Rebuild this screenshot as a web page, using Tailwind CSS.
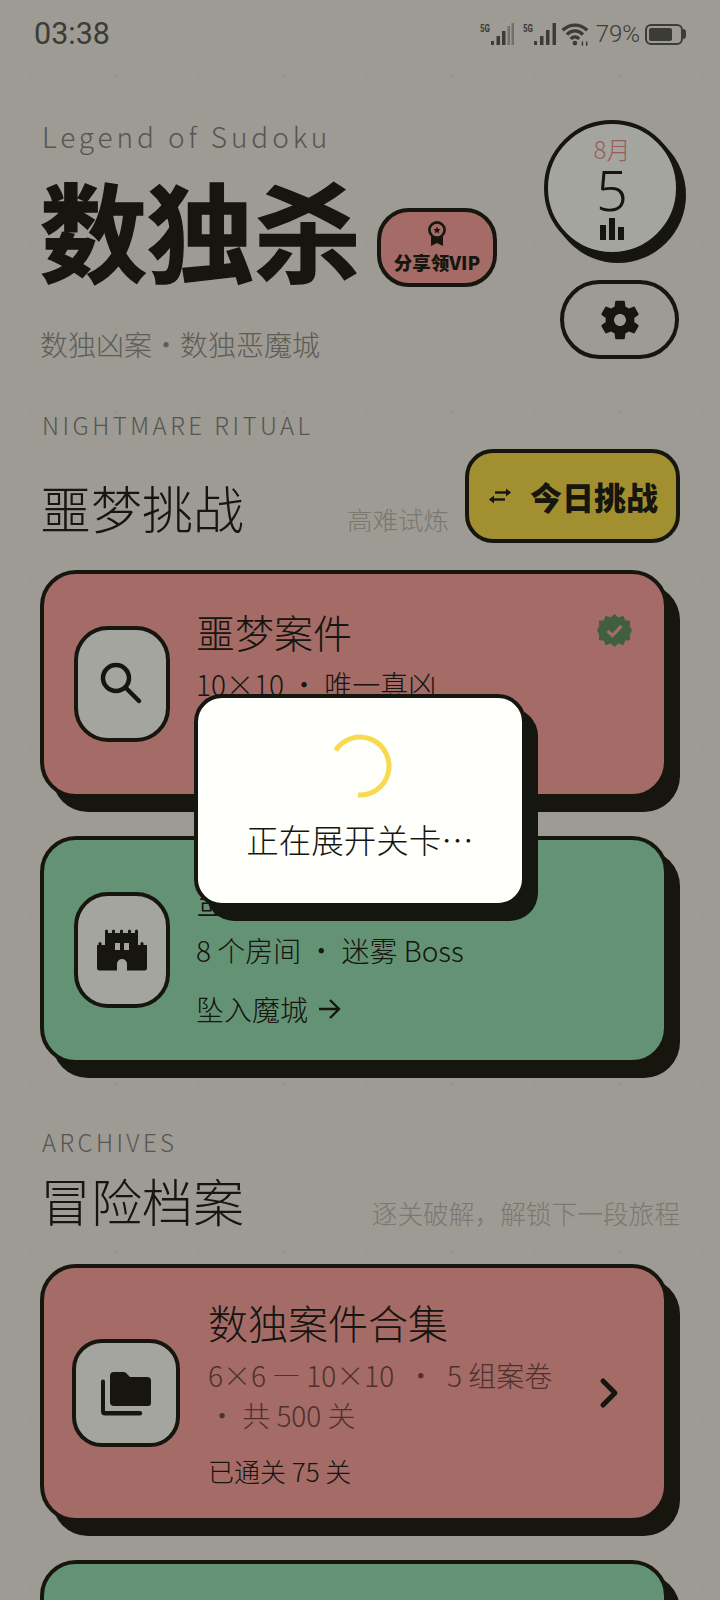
<!DOCTYPE html>
<html lang="zh-CN">
<head>
<meta charset="utf-8">
<script src="https://cdn.jsdelivr.net/npm/@tailwindcss/browser@4"></script>
</head>
<body class="m-0">
<div class="relative w-[720px] h-[1600px] overflow-hidden bg-[#f1eee3] bg-[radial-gradient(circle,#ebe8dc_1.5px,transparent_2px)] bg-[size:84px_84px] bg-[position:-10px_34px] text-[#222218] font-['Noto_Sans_CJK_SC','Noto_Sans',sans-serif]">

  <!-- status bar -->
  <div class="h-[68px] flex items-center justify-between pl-[34px] pr-[34px] text-[#5c5c54] font-['Roboto',sans-serif]">
    <span class="text-[30.500px] leading-none">03:38</span>
    <div class="flex items-center">
      <svg width="77" height="24" viewBox="0 0 77 24" fill="currentColor">
        <text x="0" y="10" font-size="11" font-weight="700" font-family="Roboto" textLength="10" lengthAdjust="spacingAndGlyphs">5G</text>
        <rect x="11" y="19" width="3" height="4"/><rect x="16.500" y="14" width="3.500" height="9"/><rect x="22" y="9" width="3.500" height="14"/>
        <rect x="27.500" y="4" width="2.500" height="19" opacity=".45"/><rect x="31.500" y="1" width="2.500" height="22" opacity=".45"/>
        <text x="43" y="10" font-size="11" font-weight="700" font-family="Roboto" textLength="10" lengthAdjust="spacingAndGlyphs">5G</text>
        <rect x="54" y="19" width="3" height="4"/><rect x="60" y="14" width="3.500" height="9"/><rect x="66" y="8" width="3.500" height="15"/><rect x="72.500" y="1" width="3.500" height="22"/>
      </svg>
      <svg class="ml-[4px]" width="30" height="26" viewBox="0 0 28 24" fill="none" stroke="currentColor" stroke-width="3">
        <path d="M1.500 8.500C8 2 18 2 24.500 8.500"/><path d="M5.500 12.500C10 8 16 8 20.500 12.500"/><path d="M9 16.500C11.500 14 14.500 14 17 16.500"/>
        <circle cx="13" cy="20.500" r="2.200" fill="currentColor" stroke="none"/>
        <path d="M20 23v-4M24 19v4" stroke-width="1.400"/>
      </svg>
      <span class="ml-[5px] text-[24px] leading-none font-light">79%</span>
      <div class="ml-[5px] flex items-center">
        <div class="w-[38px] h-[21px] rounded-[6px] border-2 border-[#5c5c54] p-[2px]"><div class="w-[78%] h-full rounded-[2px] bg-[#5c5c54]"></div></div>
        <div class="w-[3px] h-[10px] rounded-r-sm bg-[#5c5c54]"></div>
      </div>
    </div>
  </div>

  <!-- header -->
  <div class="mt-[52px] px-10 flex justify-between items-start">
    <div>
      <div class="ml-[2px] text-[28px] leading-[32px] font-light tracking-[3.900px] text-[#85857c]">Legend of Sudoku</div>
      <div class="mt-[17px] flex items-end">
        <h1 class="text-[107px] leading-[118px] font-bold [-webkit-text-stroke:1.500px_#222218]">数独杀</h1>
        <div class="ml-[16px] w-[120px] h-[79px] rounded-[32px] border-4 border-[#222218] bg-[#fca59e] flex flex-col items-center justify-center">
          <svg class="mt-[-2px]" width="24" height="28" viewBox="0 0 24 28" fill="none" stroke="#222218" stroke-width="2.600">
            <circle cx="12" cy="10" r="7.600"/>
            <path d="M12 6.500l1 2.500 2.600.2-2 1.700.7 2.600-2.300-1.400-2.300 1.400.7-2.600-2-1.700 2.600-.2z" fill="#222218" stroke="none"/>
            <path d="M6 17v9l6-3 6 3v-9" fill="#222218" stroke="none"/>
          </svg>
          <div class="mt-[2px] text-[18.500px] leading-[24px] font-black whitespace-nowrap">分享领VIP</div>
        </div>
      </div>
      <div class="mt-[37px] text-[28px] leading-[40px] font-light text-[#8f8f85]">数独凶案・数独恶魔城</div>
    </div>
    <div class="flex flex-col items-end">
      <div class="w-[136px] h-[136px] rounded-full border-4 border-[#222218] shadow-[6px_7px_0_#222218] bg-[#fefef5] flex flex-col items-center">
        <div class="mt-[10px] text-[24px] leading-[30px] font-light text-[#ea8f88]">8月</div>
        <div class="text-[56px] leading-[50px] font-light font-['Noto_Sans',sans-serif]">5</div>
        <div class="mt-[4px] flex items-end gap-[3px] h-[22px]">
          <div class="w-[6px] h-[15px] bg-[#222218]"></div>
          <div class="w-[6px] h-[22px] bg-[#222218]"></div>
          <div class="w-[6px] h-[13px] bg-[#222218]"></div>
        </div>
      </div>
      <div class="mt-[24px] mr-[1px] w-[119px] h-[79px] rounded-full border-4 border-[#222218] flex items-center justify-center">
        <svg width="48" height="48" viewBox="0 0 24 24" fill="#222218" fill-rule="evenodd"><path d="M19.140 12.940c.04-.3.06-.61.06-.94 0-.32-.02-.64-.07-.94l2.030-1.580c.18-.14.23-.41.12-.61l-1.920-3.320c-.12-.22-.37-.29-.59-.22l-2.390.96c-.5-.38-1.030-.7-1.620-.94l-.36-2.540c-.04-.24-.24-.41-.48-.41h-3.840c-.24 0-.43.17-.47.41l-.36 2.540c-.59.24-1.130.57-1.620.94l-2.390-.96c-.22-.08-.47 0-.59.22L2.740 8.870c-.12.21-.08.47.12.61l2.030 1.580c-.05.3-.09.63-.09.94s.02.64.07.94l-2.030 1.580c-.18.14-.23.41-.12.61l1.920 3.320c.12.22.37.29.59.22l2.390-.96c.5.38 1.030.7 1.620.94l.36 2.540c.05.24.24.41.48.41h3.840c.24 0 .44-.17.47-.41l.36-2.540c.59-.24 1.130-.56 1.620-.94l2.390.96c.22.08.47 0 .59-.22l1.920-3.320c.12-.22.07-.47-.12-.61l-2.010-1.580zM12 15c-1.650 0-3-1.350-3-3s1.350-3 3-3 3 1.350 3 3-1.350 3-3 3z"/></svg>
      </div>
    </div>
  </div>

  <!-- nightmare section -->
  <div class="mt-[44px] px-10">
    <div class="ml-[2px] text-[24px] leading-[34px] font-light tracking-[3.500px] text-[#85857c]">NIGHTMARE RITUAL</div>
    <div class="flex items-end mt-[7px]">
      <h2 class="mb-[4px] text-[51px] leading-[64px] font-light">噩梦挑战</h2>
      <span class="ml-auto mb-[6px] text-[25.500px] leading-[36px] font-extralight text-[#bab9ae]">高难试炼</span>
      <div class="ml-[16px] w-[215px] h-[94px] rounded-[28px] border-4 border-[#222218] bg-[#f9dd4a] flex items-center pl-[18px]">
        <svg width="26" height="20" viewBox="0 0 26 20" fill="none" stroke="#222218" stroke-width="2.400">
          <path d="M8 6.500h15"/><path d="M19 2.500L24 6.500L19 10.500z" fill="#222218" stroke="none"/>
          <path d="M18 13.500H3"/><path d="M7 9.500L2 13.500L7 17.500z" fill="#222218" stroke="none"/>
        </svg>
        <span class="ml-[17px] text-[32px] leading-[40px] font-black whitespace-nowrap">今日挑战</span>
      </div>
    </div>

    <!-- card 1 -->
    <div class="mt-[27px] w-[628px] h-[228px] rounded-[36px] border-4 border-[#222218] bg-[#fca59e] shadow-[12px_14px_0_#222218] relative flex items-center pl-[30px]">
      <div class="w-[96px] h-[116px] rounded-[34px] border-4 border-[#222218] bg-[#fefef5] flex items-center justify-center">
        <svg width="48" height="48" viewBox="0 0 48 48" fill="none" stroke="#222218" stroke-width="4.500" stroke-linecap="round"><circle cx="18" cy="18" r="13"/><path d="M27.500 27.500L41 41"/></svg>
      </div>
      <div class="ml-[26px] self-start">
        <div class="mt-[29px] text-[39px] leading-[56px] font-light">噩梦案件</div>
        <div class="mt-[5px] text-[28px] leading-[40px] font-light">10×10 ・ 唯一真凶</div>
        <div class="mt-[19px] text-[28px] leading-[40px] font-light">进入案件 →</div>
      </div>
      <svg class="absolute right-[32px] top-[39px]" width="35" height="35" viewBox="0 0 38 38">
        <polygon fill="#619261" points="19,1 23.300,4.800 28.600,3 30.600,8.100 36,8.500 35.600,14 38,19 35.600,24 36,29.500 30.600,29.900 28.600,35 23.300,33.200 19,37 14.700,33.200 9.400,35 7.400,29.900 2,29.500 2.400,24 0,19 2.400,14 2,8.500 7.400,8.100 9.400,3 14.700,4.800"/>
        <path d="M11.500 19.500L16.800 24.500L26.500 14" fill="none" stroke="#fca59e" stroke-width="3.500"/>
      </svg>
    </div>

    <!-- card 2 -->
    <div class="mt-[38px] w-[628px] h-[228px] rounded-[36px] border-4 border-[#222218] bg-[#9ae0b2] shadow-[12px_14px_0_#222218] flex items-center pl-[30px]">
      <div class="w-[96px] h-[116px] rounded-[34px] border-4 border-[#222218] bg-[#fefef5] flex items-center justify-center">
        <svg width="52" height="42" viewBox="0 0 52 42" fill="#222218" fill-rule="evenodd">
          <path d="M9 2a1.500 1.500 0 0 1 3 0V4h4V2a1.500 1.500 0 0 1 3 0V4h5V2a1.500 1.500 0 0 1 3 0V4h5V2a1.500 1.500 0 0 1 3 0V4h4V2a1.500 1.500 0 0 1 3 0V16h2.500v-1.500a1.500 1.500 0 0 1 3 0V16H51V39a2.500 2.500 0 0 1-2.500 2.500H31V35a5 5 0 0 0-10 0v6.500H3.500A2.500 2.500 0 0 1 1 39V16h1.500v-1.500a1.500 1.500 0 0 1 3 0V16H9zM19 14v7h5v-7zM28 14v7h5v-7z"/>
        </svg>
      </div>
      <div class="ml-[26px] self-start">
        <div class="mt-[29px] text-[39px] leading-[56px] font-light">噩梦魔城</div>
        <div class="mt-[5px] text-[28px] leading-[40px] font-light">8 个房间 ・ 迷雾 Boss</div>
        <div class="mt-[19px] flex items-center text-[28px] leading-[40px] font-light">坠入魔城
          <svg class="ml-[8px]" width="26" height="26" viewBox="0 0 26 26" fill="none" stroke="#222218" stroke-width="2.400"><path d="M3 13h20M14 4l9 9l-9 9"/></svg>
        </div>
      </div>
    </div>

    <!-- archives -->
    <div class="mt-[61px] ml-[2px] text-[24px] leading-[34px] font-light tracking-[3.400px] text-[#85857c]">ARCHIVES</div>
    <div class="flex items-end justify-between w-[640px] mt-[9px]">
      <h2 class="text-[51px] leading-[64px] font-light">冒险档案</h2>
      <span class="mb-[1px] text-[25.700px] leading-[36px] font-extralight text-[#bab9ae]">逐关破解，解锁下一段旅程</span>
    </div>

    <!-- card 3 -->
    <div class="mt-[32px] w-[628px] h-[258px] rounded-[36px] border-4 border-[#222218] bg-[#fca59e] shadow-[12px_14px_0_#222218] flex items-center pl-[28px]">
      <div class="shrink-0 w-[108px] h-[108px] rounded-[30px] border-4 border-[#222218] bg-[#fefef5] flex items-center justify-center">
        <svg width="52" height="46" viewBox="0 0 52 46" fill="#222218">
          <path d="M10 6a4 4 0 0 1 4-4h9.500a4 4 0 0 1 2.800 1.200L30 7h17a4 4 0 0 1 4 4v22a3 3 0 0 1-3 3H14a4 4 0 0 1-4-4z"/>
          <path d="M1 11.500a2 2 0 0 1 4 0V41h35a2 2 0 0 1 0 4.500H5a4 4 0 0 1-4-4z"/>
        </svg>
      </div>
      <div class="ml-[28px] w-[360px] pb-[4px]">
        <div class="text-[40px] leading-[56px] font-light">数独案件合集</div>
        <div class="mt-[5px] text-[28px] leading-[40px] font-extralight text-[#7a4a46]">6×6 — 10×10&nbsp; ・ &nbsp;5 组案卷 ・ 共 500 关</div>
        <div class="mt-[18px] text-[26px] leading-[36px] font-light">已通关 75 关</div>
      </div>
      <svg class="ml-[31px]" width="20" height="32" viewBox="0 0 20 32" fill="none" stroke="#222218" stroke-width="5" stroke-linecap="round" stroke-linejoin="round"><path d="M4 4l12 12L4 28"/></svg>
    </div>

    <!-- card 4 -->
    <div class="mt-[38px] w-[628px] h-[228px] rounded-[36px] border-4 border-[#222218] bg-[#9ae0b2] shadow-[12px_14px_0_#222218]"></div>
  </div>

  <!-- loading overlay -->
  <div class="absolute inset-0 bg-black/35 flex items-center justify-center">
    <div class="w-[332px] h-[213px] rounded-[28px] border-4 border-[#161610] bg-[#fffffb] shadow-[12px_14px_0_#161610] flex flex-col items-center text-[#161610]">
      <svg class="mt-[36px]" width="64" height="64" viewBox="0 0 64 64" fill="none" stroke="#f7da4e" stroke-width="5"><path d="M7.600 16.400A29 29 0 1 1 30 61"/></svg>
      <div class="mt-[18px] text-[32.500px] leading-[46px] font-light whitespace-nowrap">正在展开关卡…</div>
    </div>
  </div>
</div>
</body>
</html>
